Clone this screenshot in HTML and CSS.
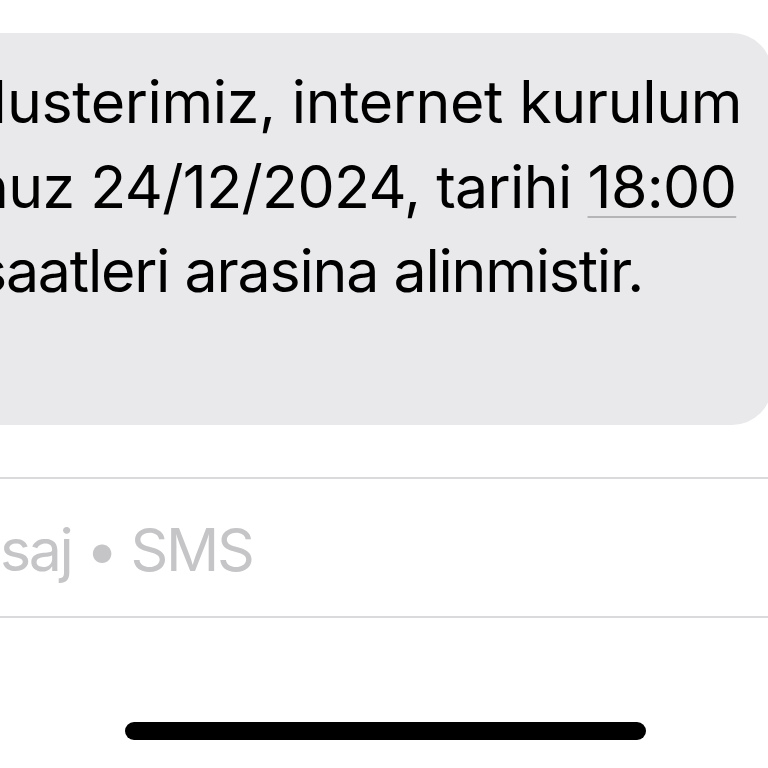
FILE: index.html
```html
<!DOCTYPE html>
<html lang="tr">
<head>
<meta charset="utf-8">
<title>SMS</title>
<link rel="stylesheet" href="styles.css">
</head>
<body>
<div class="screen">
  <div class="bubble">
    <div class="line line-1">Musterimiz, internet kurulum</div>
    <div class="line line-2">nuz 24/12/2024, tarihi <span class="time">18:00</span></div>
    <div class="line line-3">saatleri arasina alinmistir.</div>
  </div>
  <div class="composer">
    <div class="placeholder">saj • SMS</div>
  </div>
  <div class="home-area">
    <div class="home-bar"></div>
  </div>
</div>
</body>
</html>
```

FILE: styles.css
```css
html, body {
  margin: 0;
  padding: 0;
  background: #ffffff;
}

.screen {
  width: 768px;
  height: 768px;
  overflow: hidden;
  display: flex;
  flex-direction: column;
  font-family: Inter, "Noto Sans", sans-serif;
  color: #000;
}

.bubble {
  margin: 33px -4px 0 -60px;
  padding: 27px 0 0 60px;
  height: 365px;
  background: #e9e9eb;
  border-radius: 40px;
  display: flex;
  flex-direction: column;
}

.line {
  font-size: 59px;
  line-height: 84.5px;
  white-space: nowrap;
}

.line-1 { margin-left: -46px; letter-spacing: -0.35px; }
.line-2 { margin-left: -26px; letter-spacing: -0.65px; }
.line-3 { margin-left: -24px; letter-spacing: -1.2px; }

.time {
  text-decoration: underline;
  text-decoration-color: #b5b5b8;
  text-decoration-thickness: 2px;
  text-underline-offset: 8px;
}

.composer {
  margin: 52px -60px 0 -60px;
  height: 137px;
  border: 2px solid #dadadc;
  border-radius: 40px;
  display: flex;
  align-items: center;
  padding-left: 60px;
}

.placeholder {
  font-size: 59px;
  color: #c5c5c7;
  white-space: nowrap;
  letter-spacing: -2.4px;
  margin-left: -2px;
  padding-top: 4px;
}

.home-area {
  flex: 1;
  display: flex;
  justify-content: center;
  padding-top: 104px;
}

.home-bar {
  width: 521px;
  height: 18px;
  margin-left: 2px;
  background: #000;
  border-radius: 9px;
}
```
